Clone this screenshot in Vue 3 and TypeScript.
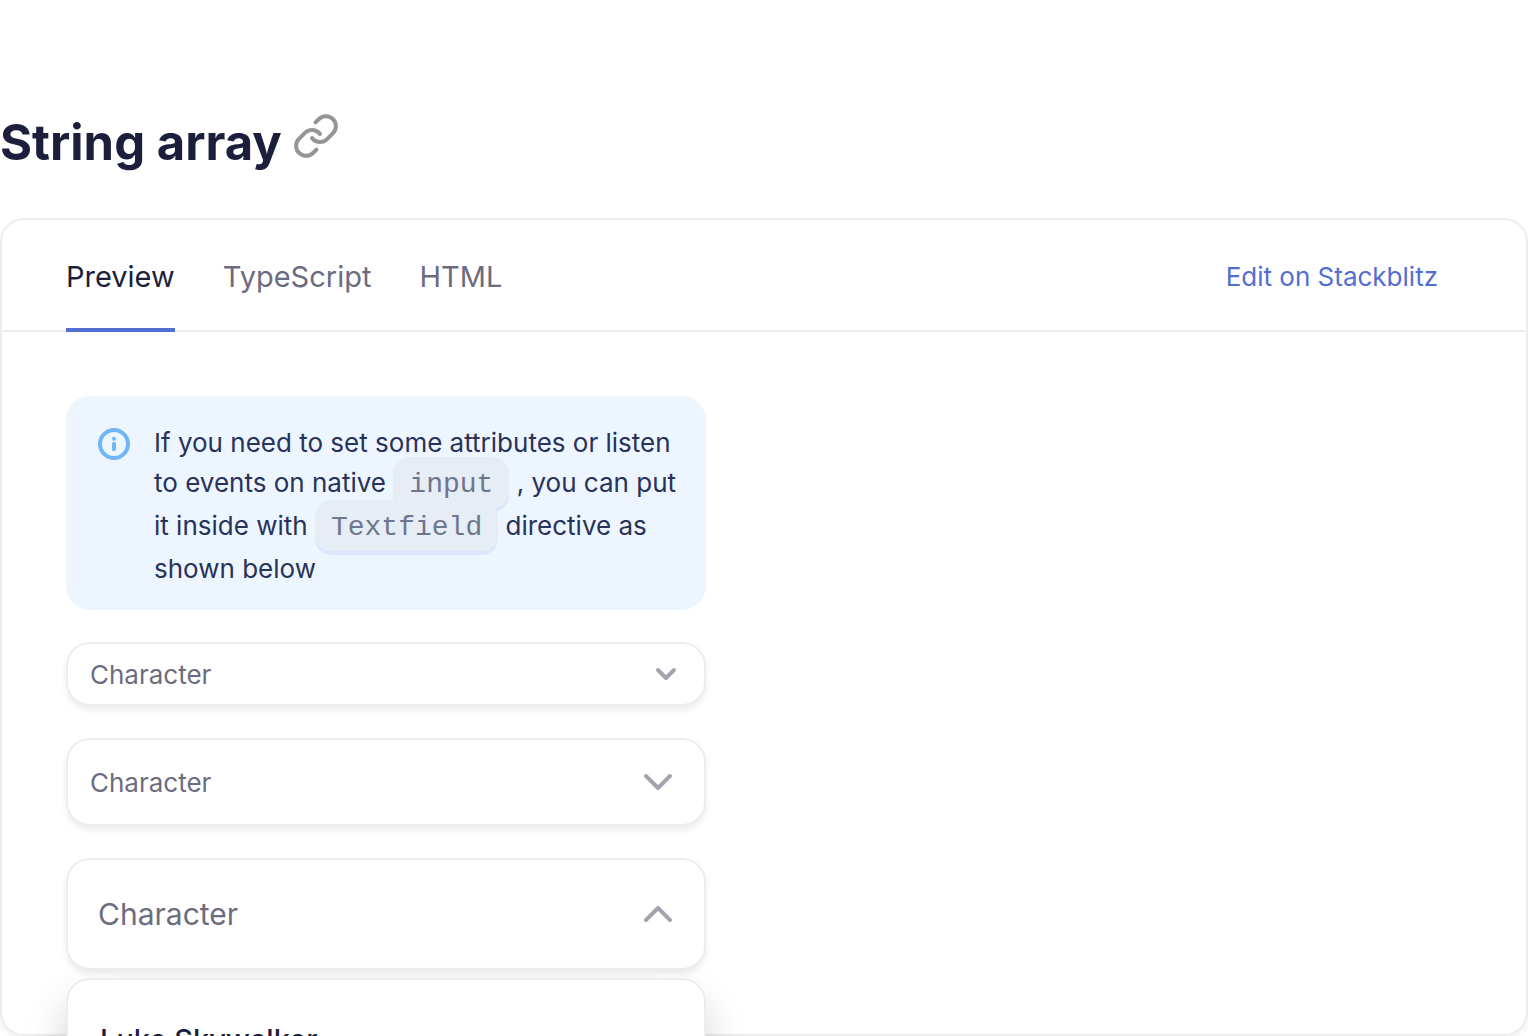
<script setup lang="ts">
import { ref } from 'vue'

type Size = 's' | 'm' | 'l'

interface Field {
  id: string
  size: Size
  open: boolean
}

const tabs: string[] = ['Preview', 'TypeScript', 'HTML']
const activeTab = ref<string>('Preview')

const fields = ref<Field[]>([
  { id: 'character-s', size: 's', open: false },
  { id: 'character-m', size: 'm', open: false },
  { id: 'character-l', size: 'l', open: true },
])

const characters: string[] = ['Luke Skywalker']
</script>

<template>
  <main class="page">
    <h2 class="title">
      String array
      <a class="anchor" href="#string-array" aria-label="Link to String array">
        <svg viewBox="0 0 24 24" fill="none" stroke="currentColor" stroke-width="2" stroke-linecap="round" stroke-linejoin="round">
          <path d="M10 13a5 5 0 0 0 7.54.54l3-3a5 5 0 0 0-7.07-7.07l-1.72 1.71" />
          <path d="M14 11a5 5 0 0 0-7.54-.54l-3 3a5 5 0 0 0 7.07 7.07l1.71-1.71" />
        </svg>
      </a>
    </h2>

    <section class="card">
      <header class="header">
        <nav class="tabs" role="tablist">
          <button
            v-for="tab in tabs"
            :key="tab"
            type="button"
            role="tab"
            class="tab"
            :class="{ active: tab === activeTab }"
            :aria-selected="tab === activeTab"
            @click="activeTab = tab"
          >{{ tab }}</button>
        </nav>
        <a class="edit" href="#stackblitz">Edit on Stackblitz</a>
      </header>

      <div class="body">
        <div class="form">
          <div class="note">
            <svg class="info" viewBox="0 0 32 32" aria-hidden="true">
              <circle cx="16" cy="16" r="14" fill="none" stroke="currentColor" stroke-width="4" />
              <circle cx="16" cy="10.7" r="2" fill="currentColor" />
              <rect x="14" y="14" width="4" height="9" rx="1.5" fill="currentColor" />
            </svg>
            <p class="note-text">
              If you need to set some attributes or listen to events on native
              <code>input</code> , you can put it inside with
              <code>Textfield</code> directive as shown below
            </p>
          </div>

          <div v-for="field in fields" :key="field.id" class="field" :class="field.size">
            <input
              :id="field.id"
              class="control"
              type="text"
              role="combobox"
              placeholder="Character"
              aria-label="Character"
              :aria-expanded="field.open"
            />
            <button
              type="button"
              class="toggle"
              aria-label="Toggle list"
              @click="field.open = !field.open"
            >
              <svg
                class="chevron"
                :class="{ up: field.open }"
                viewBox="0 0 32 32"
                fill="none"
                stroke="currentColor"
                stroke-width="4"
                stroke-linecap="round"
                stroke-linejoin="round"
              >
                <path v-if="field.size === 's'" d="M8 12l8 8 8-8" />
                <path v-else d="M4 10l12 12 12-12" />
              </svg>
            </button>
            <div v-if="field.open" class="dropdown" role="listbox">
              <button v-for="name in characters" :key="name" type="button" role="option" class="option">{{ name }}</button>
            </div>
          </div>
        </div>
      </div>
    </section>
  </main>
</template>

<style>
body {
  margin: 0;
  background: #fff;
}
</style>

<style scoped>
.page {
  box-sizing: border-box;
  padding-top: 107px;
  overflow: hidden;
  font-family: Inter, "Noto Sans", sans-serif;
  color: #1b1f3b;
}

.title {
  display: flex;
  align-items: center;
  gap: 10px;
  margin: 0 0 39px;
  font-size: 49px;
  line-height: 72px;
  font-weight: 700;
}

.anchor {
  display: flex;
  padding-bottom: 14px;
  color: #959595;
}

.anchor svg {
  width: 48px;
  height: 48px;
}

.card {
  border: 2px solid #ededed;
  border-radius: 24px;
  box-shadow: 0 4px 6px rgba(0, 0, 0, 0.06);
}

.header {
  display: flex;
  align-items: center;
  justify-content: space-between;
  padding: 0 88px 0 64px;
  box-shadow: inset 0 -2px #ededed;
}

.tabs {
  display: flex;
  gap: 48px;
}

.tab {
  box-sizing: border-box;
  height: 112px;
  padding: 0;
  border: 0;
  background: none;
  font: inherit;
  font-size: 29px;
  color: #6c6c80;
  cursor: pointer;
}

.tab.active {
  color: #1b1f3b;
  box-shadow: inset 0 -4px #526ed3;
}

.edit {
  font-size: 26px;
  color: #526ed3;
  text-decoration: none;
}

.body {
  padding: 64px;
}

.form {
  display: flex;
  flex-direction: column;
  gap: 32px;
  max-width: 640px;
}

.note {
  display: flex;
  align-items: flex-start;
  gap: 24px;
  padding: 27px 24px 21px 32px;
  border-radius: 24px;
  background: #edf6fe;
}

.info {
  flex: none;
  width: 32px;
  height: 32px;
  margin-top: 5px;
  color: #70b6f6;
}

.note-text {
  margin: 0;
  font-size: 26px;
  line-height: 40px;
  color: #28325a;
}

.note-text code {
  padding: 12px 16px 8px;
  border-radius: 16px;
  background: #e6edf4;
  box-shadow: 0 4px #dde6ff;
  font-family: "Liberation Mono", monospace;
  font-size: 28px;
  line-height: 42px;
  color: #6e7590;
}

.field {
  position: relative;
  box-sizing: border-box;
  display: flex;
  align-items: center;
  border: 2px solid #ededed;
  border-radius: 24px;
  background: #fff;
  box-shadow: 0 4px 6px rgba(0, 0, 0, 0.08);
}

.field.s {
  height: 64px;
  padding: 0 22px;
}

.field.m {
  height: 88px;
  padding: 0 30px 0 22px;
}

.field.l {
  height: 112px;
  padding: 0 30px;
}

.control {
  flex: 1;
  min-width: 0;
  padding: 0;
  border: 0;
  outline: 0;
  background: none;
  font: inherit;
  font-size: 26px;
  color: #1b1f3b;
}

.l .control {
  font-size: 30px;
}

.control::placeholder {
  color: #6c6c80;
  opacity: 1;
}

.toggle {
  display: flex;
  padding: 0;
  border: 0;
  background: none;
  color: #a4a4b1;
  cursor: pointer;
}

.chevron {
  width: 32px;
  height: 32px;
}

.chevron.up {
  transform: rotate(180deg);
}

.dropdown {
  position: absolute;
  top: calc(100% + 10px);
  left: -2px;
  right: -2px;
  box-sizing: border-box;
  padding: 16px;
  border: 2px solid #ededed;
  border-radius: 24px;
  background: #fff;
  box-shadow: 0 24px 40px rgba(0, 0, 0, 0.18);
}

.option {
  display: block;
  width: 100%;
  padding: 24px 16px;
  border: 0;
  background: none;
  font: inherit;
  font-size: 29px;
  font-weight: 500;
  line-height: 40px;
  text-align: left;
  color: #1b1f3b;
}
</style>
